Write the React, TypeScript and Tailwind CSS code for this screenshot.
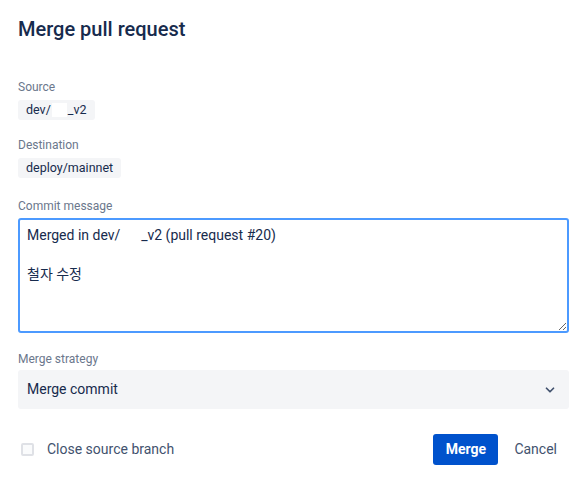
import { ChevronDown } from 'lucide-react'

const font = { fontFamily: 'Roboto, "Noto Sans CJK KR", sans-serif' }

function Label({ children, className = '' }: { children: React.ReactNode; className?: string }) {
  return <div className={`text-[12px] leading-[16px] text-[#6B778C] ${className}`}>{children}</div>
}

function Branch({ children }: { children: React.ReactNode }) {
  return (
    <div className="mt-[5px] flex w-fit items-center h-[20px] px-[8px] rounded-[3px] bg-[#F4F5F7] text-[12.5px] leading-[20px] text-[#172B4D]">
      {children}
    </div>
  )
}

export default function App() {
  return (
    <div className="w-[586px] h-[484px] bg-white pl-[18px] pr-[17px] pt-[17px] text-[#172B4D] font-['Roboto','Noto_Sans_CJK_KR',sans-serif]">
      {/* header */}
      <h1 className="text-[20px] leading-[24px] font-medium text-[#172B4D]">Merge pull request</h1>

      {/* source / destination */}
      <Label className="mt-[38px]">Source</Label>
      <Branch>
        dev/<span className="inline-block w-[15px] h-[14px] bg-white mx-[1px]" />_v2
      </Branch>

      <Label className="mt-[17px]">Destination</Label>
      <Branch>deploy/mainnet</Branch>

      {/* commit message */}
      <Label className="mt-[20px]">Commit message</Label>
      <textarea
        className="mt-[4px] block w-full h-[115px] border-2 border-[#4C9AFF] rounded-[3px] px-[7px] pt-[6px] text-[14px] leading-[19.5px] text-[#172B4D] outline-none"
        style={font}
        defaultValue={'Merged in dev/      _v2 (pull request #20)\n\n철자 수정'}
      />

      {/* strategy */}
      <Label className="mt-[18px]">Merge strategy</Label>
      <div className="mt-[3px] flex items-center justify-between h-[39px] rounded-[3px] bg-[#F4F5F7] pl-[9px] pr-[12px]">
        <span className="text-[14px] text-[#172B4D]">Merge commit</span>
        <ChevronDown className="w-[14px] h-[14px] text-[#42526E]" strokeWidth={3} />
      </div>

      {/* footer */}
      <div className="mt-[25px] flex items-center justify-between">
        <label className="flex items-center gap-[13px] pl-[3px]">
          <span className="w-[13px] h-[13px] rounded-[2px] border-2 border-[#DFE1E6] bg-[#FAFBFC]" />
          <span className="text-[14px] text-[#42526E]">Close source branch</span>
        </label>
        <div className="flex items-center gap-[4px]">
          <button className="h-[31px] w-[65px] rounded-[3px] bg-[#0052CC] text-white text-[14px] font-bold">Merge</button>
          <button className="h-[31px] px-[12px] text-[14px] text-[#42526E]">Cancel</button>
        </div>
      </div>
    </div>
  )
}
